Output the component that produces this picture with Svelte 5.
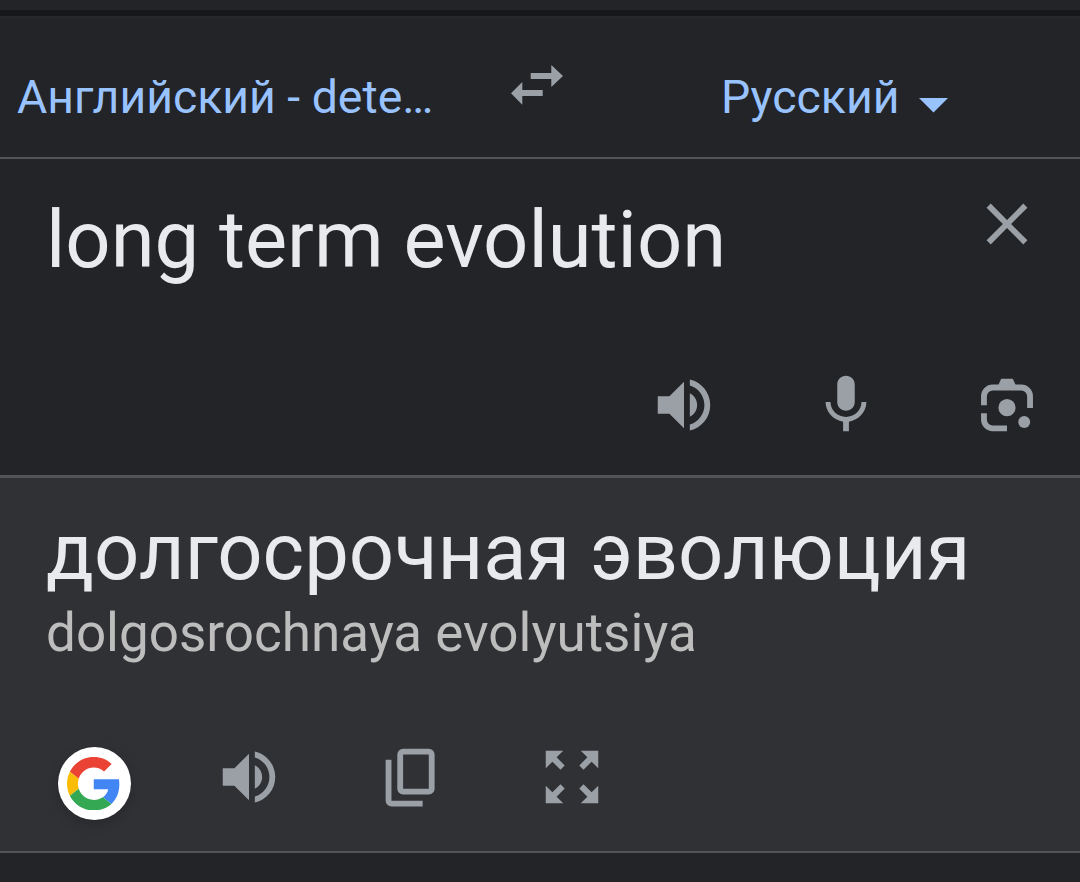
<script>
    let source = 'long term evolution'
    let result = 'долгосрочная эволюция'
    let translit = 'dolgosrochnaya evolyutsiya'

    const speaker = 'M3 9v6h4l5 5V4L7 9H3zm13.5 3c0-1.77-1.02-3.29-2.5-4.03v8.05c1.48-.73 2.5-2.25 2.5-4.02zM14 3.23v2.06c2.89.86 5 3.54 5 6.71s-2.11 5.85-5 6.71v2.06c4.01-.91 7-4.49 7-8.77s-2.99-7.86-7-8.77z'
    const corners = [0, 90, 180, 270]
</script>

<div class="page">
    <div class="strip"></div>
    <header>
        <div class="lang from">Английский - dete…</div>
        <svg class="swap" width="52" height="40" viewBox="0 0 52 40">
            <path d="M19.7 8h20.6V0L52 11 40.3 22v-8H19.7zM31.7 31H11.3v8.7L0 28.3 11.3 17v8h20.4z" />
        </svg>
        <div class="lang to">Русский</div>
        <svg class="caret" width="29" height="15" viewBox="0 0 29 15"><path d="M0 0h29L14.5 14.5z" /></svg>
    </header>
    <section class="source">
        <div class="row">
            <div class="big">{source}</div>
            <svg class="icon close" viewBox="0 0 24 24">
                <path d="M19 6.41L17.59 5 12 10.59 6.41 5 5 6.41 10.59 12 5 17.59 6.41 19 12 13.41 17.59 19 19 17.59 13.41 12z" />
            </svg>
        </div>
        <div class="tools">
            <svg class="icon" viewBox="0 0 24 24"><path d={speaker} /></svg>
            <svg class="icon" viewBox="0 0 24 24">
                <path d="M12 14c1.66 0 3-1.34 3-3V5c0-1.66-1.34-3-3-3S9 3.34 9 5v6c0 1.66 1.34 3 3 3zm5.3-3c0 3-2.54 5.1-5.3 5.1S6.7 14 6.7 11H5c0 3.41 2.72 6.23 6 6.72V21h2v-3.28c3.28-.48 6-3.3 6-6.72h-1.7z" />
            </svg>
            <svg class="icon" viewBox="0 0 24 24">
                <path class="line" d="M4.1 12.1V9a3 3 0 0 1 3-3h9.8a3 3 0 0 1 3 3v4M4.1 14.8V17a3 3 0 0 0 3 3H12" />
                <path d="M9 5.2L10 3h4l1 2.2z" />
                <circle cx="12" cy="12.9" r="2.95" />
                <circle cx="17.9" cy="17.8" r="2.05" />
            </svg>
        </div>
    </section>
    <section class="result">
        <div class="big">{result}</div>
        <div class="translit">{translit}</div>
        <div class="tools">
            <div class="google">
                <svg width="53.5" height="53.5" viewBox="0 0 48 48">
                    <path fill="#ea4335" d="M24 9.5c3.54 0 6.71 1.22 9.21 3.6l6.85-6.85C35.9 2.38 30.47 0 24 0 14.62 0 6.51 5.38 2.56 13.22l7.98 6.19C12.43 13.72 17.74 9.5 24 9.5z" />
                    <path fill="#4285f4" d="M46.98 24.55c0-1.57-.15-3.09-.38-4.55H24v9.02h12.94c-.58 2.96-2.26 5.48-4.78 7.18l7.73 6c4.51-4.18 7.09-10.36 7.09-17.65z" />
                    <path fill="#fbbc05" d="M10.53 28.59c-.48-1.45-.76-2.99-.76-4.59s.27-3.14.76-4.59l-7.98-6.19C.92 16.46 0 20.12 0 24c0 3.88.92 7.54 2.56 10.78l7.97-6.19z" />
                    <path fill="#34a853" d="M24 48c6.48 0 11.93-2.13 15.89-5.81l-7.73-6c-2.15 1.45-4.92 2.3-8.16 2.3-6.26 0-11.57-4.22-13.47-9.91l-7.98 6.19C6.51 42.62 14.62 48 24 48z" />
                </svg>
            </div>
            <svg class="icon" viewBox="0 0 24 24"><path d={speaker} /></svg>
            <svg class="icon" viewBox="0 0 24 24">
                <rect class="line" x="8.3" y="3.3" width="10.8" height="13.7" rx="1" />
                <path class="line" d="M4.3 6.1v14a1 1 0 0 0 1 1H16" />
            </svg>
            <svg class="icon" viewBox="0 0 24 24">
                {#each corners as angle}
                    <path transform="rotate({angle} 12 12)" d="M3 3h6L6.73 5.27 9.5 8.05 8.05 9.5 5.27 6.73 3 9z" />
                {/each}
            </svg>
        </div>
    </section>
</div>

<style>
    :global(body) {
        margin: 0;
        background: #232428;
    }
    .page {
        height: 882px;
        overflow: hidden;
        font-family: Roboto, sans-serif;
        background: #232428;
    }
    .strip {
        height: 6px;
        border-top: 10px solid #232428;
        background: #16171b;
    }
    header {
        box-sizing: border-box;
        display: flex;
        height: 143px;
        padding-left: 17px;
        border-top: 2px solid #26272b;
        border-bottom: 2px solid #525457;
    }
    .lang {
        padding-top: 52px;
        font-size: 46.4px;
        line-height: 54px;
        color: #99c3ff;
        white-space: nowrap;
    }
    .from {
        width: 494px;
    }
    .swap {
        margin-top: 47px;
    }
    .to {
        width: 177px;
        margin-left: 158px;
    }
    svg {
        display: block;
        flex: none;
        fill: #9aa0a6;
    }
    .caret {
        margin: 80px 0 0 21px;
        fill: #99c3ff;
    }
    .icon {
        width: 70px;
        height: 70px;
    }
    .line {
        fill: none;
        stroke: #9aa0a6;
        stroke-width: 2;
    }
    .source {
        box-sizing: border-box;
        height: 319px;
        padding: 34px 38px 0 46px;
        border-bottom: 3px solid #525457;
    }
    .row {
        display: flex;
        justify-content: space-between;
        height: 94px;
    }
    .close {
        margin-top: -4px;
    }
    .big {
        font-size: 79.5px;
        line-height: 94px;
        color: #e8eaed;
        white-space: nowrap;
    }
    .tools {
        display: flex;
        gap: 91.5px;
    }
    .source .tools {
        justify-content: flex-end;
        margin-top: 83px;
    }
    .result {
        box-sizing: border-box;
        height: 375px;
        padding: 27px 46px 0;
        background: #303135;
        border-bottom: 2px solid #525457;
    }
    .translit {
        margin-top: 3px;
        font-size: 53px;
        line-height: 62px;
        color: #bdbdbd;
    }
    .result .tools {
        margin: 78.4px 0 0 12px;
    }
    .google {
        box-sizing: border-box;
        width: 73px;
        height: 73px;
        margin: 4.6px -8.2px 0 0;
        padding: 9.7px 9.3px;
        border-radius: 50%;
        background: #fff;
        box-shadow: 0 4px 12px rgba(0, 0, 0, .18);
    }
</style>
